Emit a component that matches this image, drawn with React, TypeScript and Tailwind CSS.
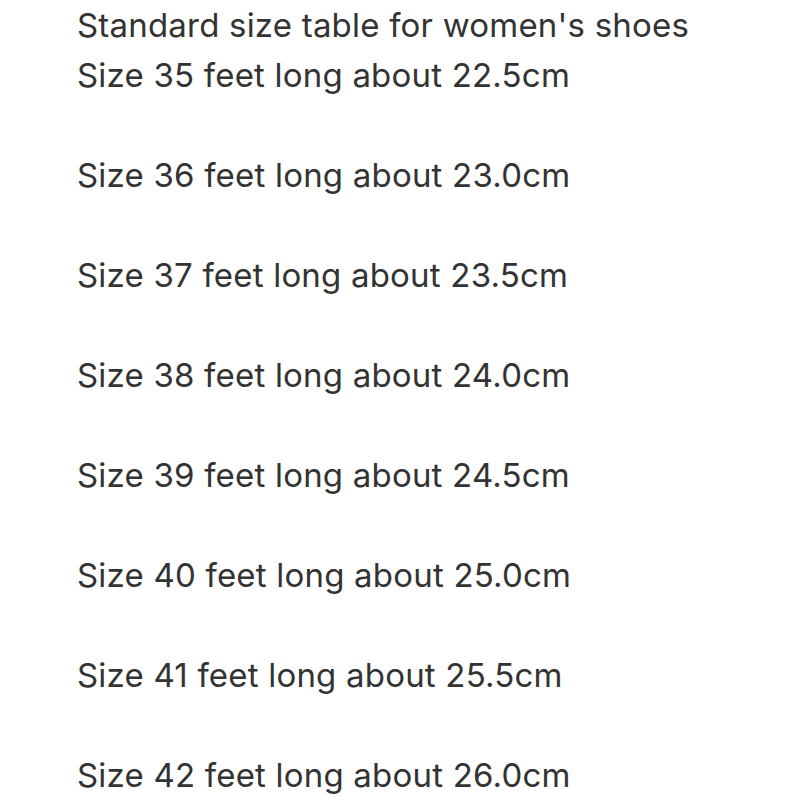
const sizes = [
  ['35', '22.5'],
  ['36', '23.0'],
  ['37', '23.5'],
  ['38', '24.0'],
  ['39', '24.5'],
  ['40', '25.0'],
  ['41', '25.5'],
  ['42', '26.0'],
]

export default function App() {
  return (
    <div className="w-[800px] h-[800px] overflow-hidden bg-white pl-[77px] text-[#333333] text-[33px] tracking-[0.2px] leading-[50px] font-['Inter',sans-serif]">
      <p>Standard size table for women's shoes</p>
      {sizes.map(([size, len], i) => (
        <div key={size}>
          {i > 0 && <div className="h-[50px]" />}
          <p>
            Size {size} feet long about {len}cm
          </p>
        </div>
      ))}
    </div>
  )
}
